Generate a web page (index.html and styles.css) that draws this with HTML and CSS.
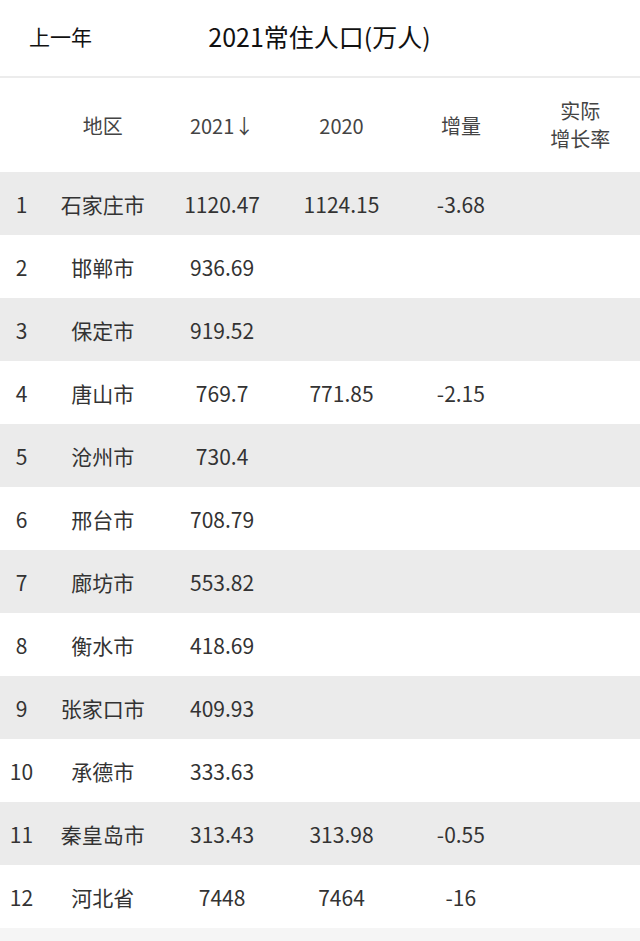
FILE: index.html
```html
<!DOCTYPE html>
<html lang="zh">
<head>
<meta charset="utf-8">
<link rel="stylesheet" href="styles.css">
</head>
<body>
<div class="topbar">
  <span class="prev">上一年</span>
  <span class="title">2021常住人口(万人)</span>
  <span></span>
</div>
<div class="table">
  <div class="row head">
    <div class="c"></div>
    <div class="c">地区</div>
    <div class="c">2021↓</div>
    <div class="c">2020</div>
    <div class="c">增量</div>
    <div class="c two">实际<br>增长率</div>
  </div>
  <div class="row odd"><div class="c">1</div><div class="c">石家庄市</div><div class="c">1120.47</div><div class="c">1124.15</div><div class="c">-3.68</div><div class="c"></div></div>
  <div class="row"><div class="c">2</div><div class="c">邯郸市</div><div class="c">936.69</div><div class="c"></div><div class="c"></div><div class="c"></div></div>
  <div class="row odd"><div class="c">3</div><div class="c">保定市</div><div class="c">919.52</div><div class="c"></div><div class="c"></div><div class="c"></div></div>
  <div class="row"><div class="c">4</div><div class="c">唐山市</div><div class="c">769.7</div><div class="c">771.85</div><div class="c">-2.15</div><div class="c"></div></div>
  <div class="row odd"><div class="c">5</div><div class="c">沧州市</div><div class="c">730.4</div><div class="c"></div><div class="c"></div><div class="c"></div></div>
  <div class="row"><div class="c">6</div><div class="c">邢台市</div><div class="c">708.79</div><div class="c"></div><div class="c"></div><div class="c"></div></div>
  <div class="row odd"><div class="c">7</div><div class="c">廊坊市</div><div class="c">553.82</div><div class="c"></div><div class="c"></div><div class="c"></div></div>
  <div class="row"><div class="c">8</div><div class="c">衡水市</div><div class="c">418.69</div><div class="c"></div><div class="c"></div><div class="c"></div></div>
  <div class="row odd"><div class="c">9</div><div class="c">张家口市</div><div class="c">409.93</div><div class="c"></div><div class="c"></div><div class="c"></div></div>
  <div class="row"><div class="c">10</div><div class="c">承德市</div><div class="c">333.63</div><div class="c"></div><div class="c"></div><div class="c"></div></div>
  <div class="row odd"><div class="c">11</div><div class="c">秦皇岛市</div><div class="c">313.43</div><div class="c">313.98</div><div class="c">-0.55</div><div class="c"></div></div>
  <div class="row"><div class="c">12</div><div class="c">河北省</div><div class="c">7448</div><div class="c">7464</div><div class="c">-16</div><div class="c"></div></div>
  <div class="row light"><div class="c"></div><div class="c"></div><div class="c"></div><div class="c"></div><div class="c"></div><div class="c"></div></div>
</div>
</body>
</html>
```

FILE: styles.css
```css
html, body {
  margin: 0;
  padding: 0;
  background: #fff;
  font-family: "Noto Sans CJK SC", "Noto Sans", sans-serif;
  color: #333;
  overflow: hidden;
}
.topbar {
  box-sizing: border-box;
  height: 78px;
  border-bottom: 2px solid #ececec;
  display: grid;
  grid-template-columns: 1fr auto 1fr;
  align-items: center;
  padding: 0 30px 4px 29px;
}
.prev {
  font-size: 21px;
  color: #111;
  justify-self: start;
}
.title {
  font-size: 25px;
  color: #111;
}
.table {
  display: flex;
  flex-direction: column;
}
.row {
  display: grid;
  grid-template-columns: 43px repeat(5, 1fr);
  height: 63px;
  align-items: center;
  font-size: 21px;
}
.row.head {
  height: 94px;
  font-size: 20px;
  color: #444;
}
.row.odd {
  background: #ebebeb;
}
.row.light {
  background: #f5f5f5;
}
.c {
  text-align: center;
  white-space: nowrap;
}
.c.two {
  line-height: 28px;
}
```
